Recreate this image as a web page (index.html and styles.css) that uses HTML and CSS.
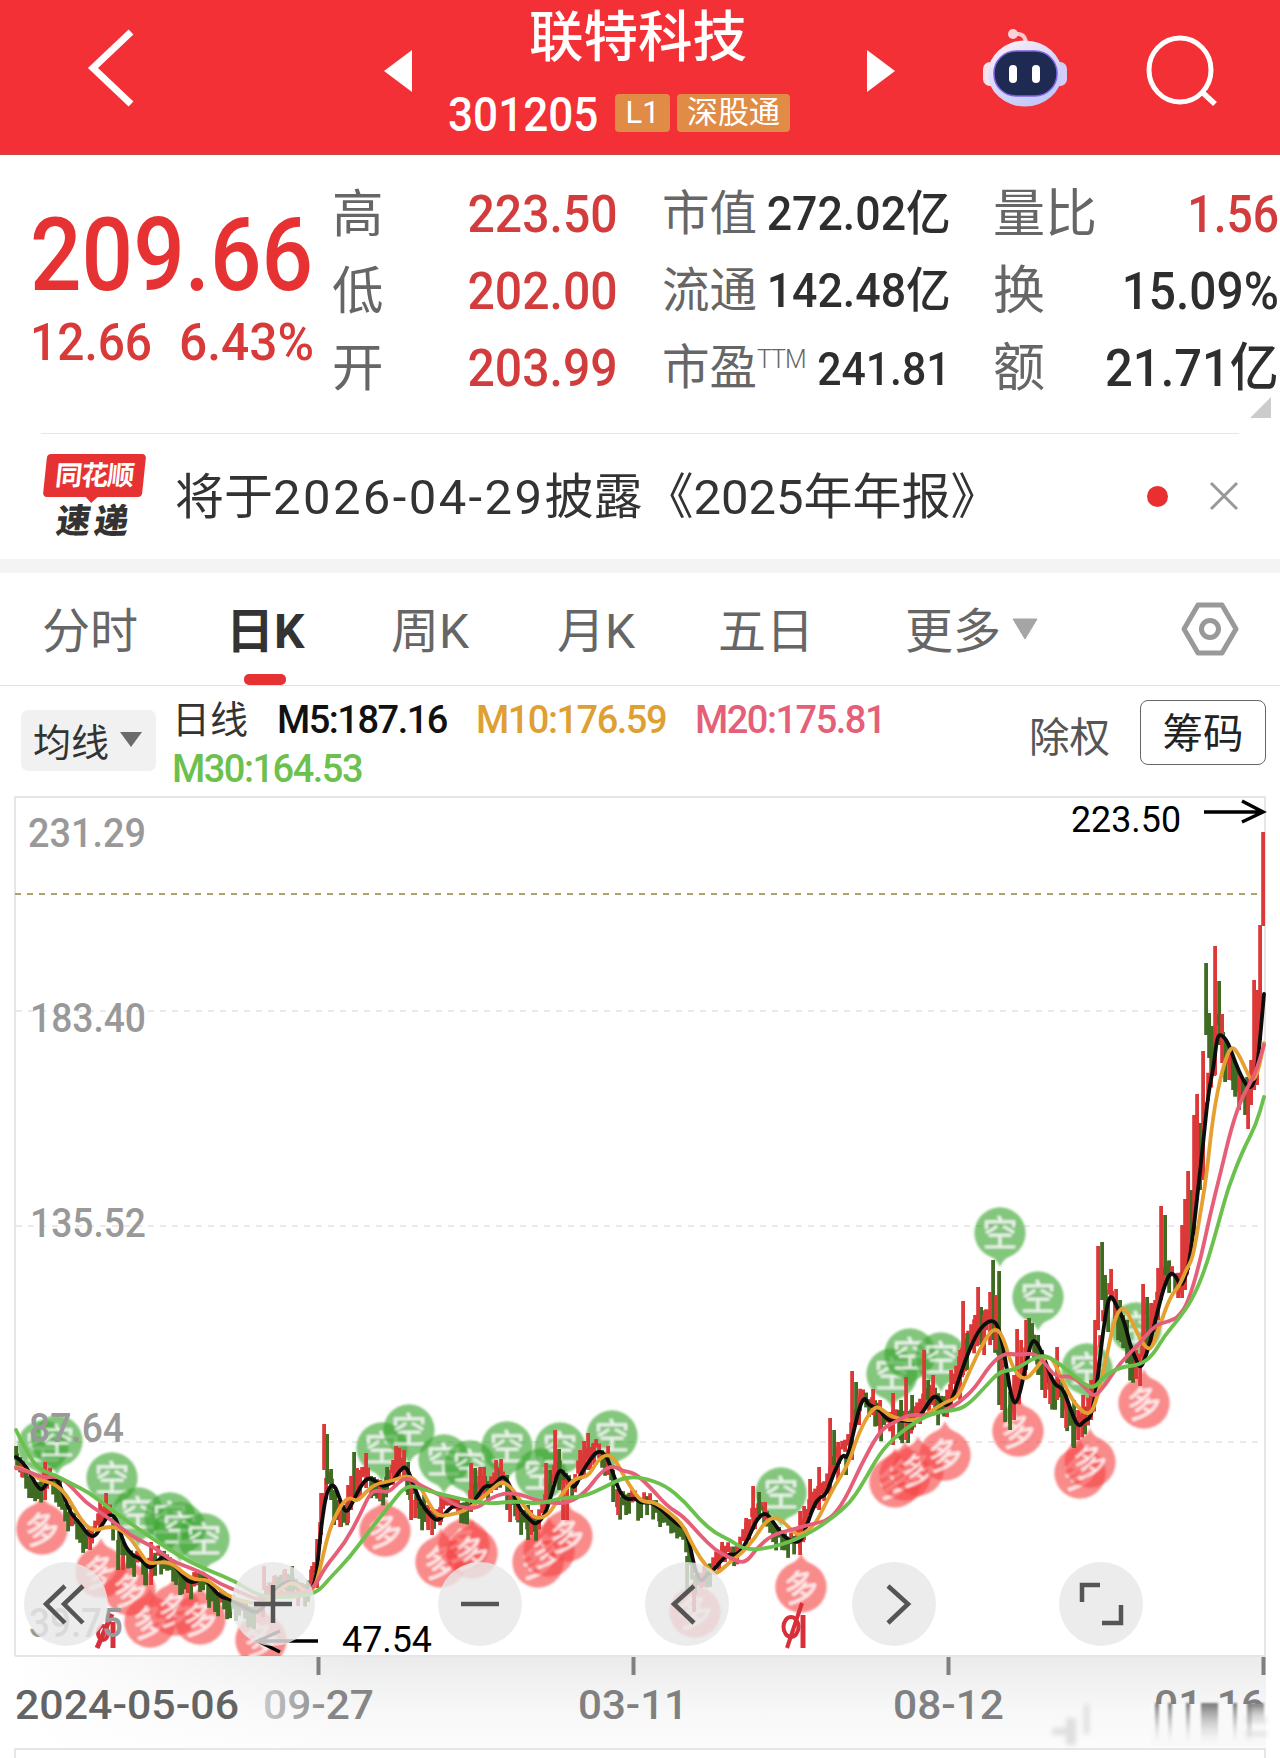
FILE: index.html
```html
<!DOCTYPE html>
<html lang="zh-CN">
<head>
    <meta charset="UTF-8">
    <meta name="viewport" content="width=device-width, initial-scale=1.0">
    <title>联特科技 301205</title>
    <link rel="stylesheet" href="styles.css">
</head>
<body>
<header class="topbar">
    <svg class="back" width="50" height="84" viewBox="0 0 50 84"><path d="M45 6L7 42L45 78" fill="none" stroke="#fff" stroke-width="7"/></svg>
    <svg class="prev" width="28" height="42" viewBox="0 0 28 42"><path d="M28 0V42L0 21Z" fill="#fff"/></svg>
    <div class="stock">
        <h1>联特科技</h1>
        <div class="stock-sub">
            <span class="code"><span class="num">301205</span></span>
            <span class="badge">L1</span>
            <span class="badge wide">深股通</span>
        </div>
    </div>
    <svg class="next" width="28" height="42" viewBox="0 0 28 42"><path d="M0 0V42L28 21Z" fill="#fff"/></svg>
    <svg class="robot" width="88" height="80" viewBox="0 0 88 80">
        <defs>
            <linearGradient id="shell" x1="0" y1="0" x2="0.6" y2="1">
                <stop offset="0" stop-color="#fff2f4"/><stop offset="0.55" stop-color="#dcd8fb"/><stop offset="1" stop-color="#c3c8fa"/>
            </linearGradient>
        </defs>
        <path d="M31 7Q43 5 44 16" fill="none" stroke="#fbc6cc" stroke-width="4"/>
        <circle cx="31" cy="7" r="5" fill="#fbd3d8"/>
        <rect x="1" y="35" width="14" height="24" rx="7" fill="#f7e3ee"/>
        <rect x="71" y="35" width="14" height="24" rx="7" fill="#d4cdf8"/>
        <ellipse cx="43" cy="46.500" rx="37" ry="33" fill="url(#shell)"/>
        <rect x="12" y="24" width="63" height="45" rx="22" fill="#1f2a52" stroke="#7c63e0" stroke-width="1.500"/>
        <rect x="27" y="38" width="8" height="18" rx="4" fill="#fff"/>
        <rect x="50" y="38" width="8" height="18" rx="4" fill="#fff"/>
    </svg>
    <svg class="search" width="74" height="74" viewBox="0 0 74 74"><ellipse cx="34" cy="36" rx="31" ry="32" fill="none" stroke="#fff" stroke-width="5"/><path d="M56 58L69 70" stroke="#fff" stroke-width="5.500"/></svg>
</header>

<section class="quote">
    <div class="price-box">
        <div class="price"><span class="num">209.66</span></div>
        <div class="change"><span class="num">12.66</span><span class="num rate">6.43%</span></div>
    </div>
    <dl class="col-a">
        <dt>高</dt><dd class="up"><span class="num">223.50</span></dd>
        <dt>低</dt><dd class="up"><span class="num">202.00</span></dd>
        <dt>开</dt><dd class="up"><span class="num">203.99</span></dd>
    </dl>
    <dl class="col-b">
        <dt>市值</dt><dd><span class="num">272.02亿</span></dd>
        <dt>流通</dt><dd><span class="num">142.48亿</span></dd>
        <dt>市盈<sup>TTM</sup></dt><dd><span class="num pe">241.81</span></dd>
    </dl>
    <dl class="col-c">
        <dt>量比</dt><dd class="up"><span class="num">1.56</span></dd>
        <dt>换</dt><dd><span class="num">15.09%</span></dd>
        <dt>额</dt><dd><span class="num">21.71亿</span></dd>
    </dl>
    <i class="corner"></i>
</section>

<section class="notice">
    <div class="logo">
        <div class="logo-top">同花顺</div>
        <div class="logo-bottom">速递</div>
    </div>
    <p>将于<span class="date">2026-04-29</span>披露<span class="book">《2025年年报》</span></p>
    <i class="dot"></i>
    <svg class="close" width="30" height="30" viewBox="0 0 30 30"><path d="M2 2L28 28M28 2L2 28" stroke="#999" stroke-width="3"/></svg>
</section>

<nav class="tabs">
    <a>分时</a>
    <a class="active">日K</a>
    <a>周K</a>
    <a>月K</a>
    <a>五日</a>
    <a>更多<svg width="26" height="22" viewBox="0 0 26 22"><path d="M1 1H25L13 21Z" fill="#a5a5a5" stroke="#a5a5a5" stroke-linejoin="round"/></svg></a>
    <svg class="gear" width="58" height="54" viewBox="0 0 58 54"><path d="M17 3H41L55 27L41 51H17L3 27Z" fill="none" stroke="#999" stroke-width="5" stroke-linejoin="round"/><circle cx="29" cy="27" r="8.500" fill="none" stroke="#999" stroke-width="5"/></svg>
</nav>

<section class="legend">
    <div class="select">均线<svg width="22" height="15" viewBox="0 0 22 15"><path d="M0 0H22L11 15Z" fill="#6b6b6b"/></svg></div>
    <div class="ma-list">
        <span class="day">日线</span>
        <span class="ma m5">M5:187.16</span>
        <span class="ma m10">M10:176.59</span>
        <span class="ma m20">M20:175.81</span>
        <span class="ma m30">M30:164.53</span>
    </div>
    <span class="adjust">除权</span>
    <button class="chips">筹码</button>
</section>

<svg id="chart" class="chart" width="1280" height="968" viewBox="0 790 1280 968">
    <defs>
        <linearGradient id="band" x1="0" y1="0" x2="0" y2="1">
            <stop offset="0" stop-color="#ebebeb"/><stop offset="0.6" stop-color="#f8f8f8"/><stop offset="1" stop-color="#fcfcfc"/>
        </linearGradient>
        <linearGradient id="bandFade" x1="0" y1="0" x2="1" y2="0">
            <stop offset="0" stop-color="#fff"/><stop offset="1" stop-color="#fff" stop-opacity="0"/>
        </linearGradient>
        <linearGradient id="smear" x1="0" y1="0" x2="0" y2="1">
            <stop offset="0" stop-color="#777"/><stop offset="1" stop-color="#fafafa" stop-opacity="0.200"/>
        </linearGradient>
        <linearGradient id="dateFade" gradientUnits="userSpaceOnUse" x1="264" y1="0" x2="330" y2="0">
            <stop offset="0" stop-color="#c8c8c8"/><stop offset="1" stop-color="#868686"/>
        </linearGradient>
        <clipPath id="plot"><rect x="14" y="796" width="1252" height="860"/></clipPath>
        <filter id="soft" x="-10%" y="-10%" width="120%" height="120%"><feGaussianBlur stdDeviation="0.900"/></filter>
        <filter id="haze" x="-10%" y="-10%" width="120%" height="120%"><feGaussianBlur stdDeviation="2.500"/></filter>
    </defs>

    <!-- frame and grid -->
    <rect x="15" y="1656" width="1251" height="92" fill="url(#band)"/>
    <rect x="14" y="1656" width="340" height="92" fill="url(#bandFade)"/>
    <g fill="none" stroke="#e6e6e6" stroke-width="2">
        <path d="M15 1656V797H1265V1656"/>
        <path d="M15 1656H1265"/>
        <path d="M15 1758V1749H1265V1758"/>
    </g>
    <g stroke="#e3e3e3" stroke-width="1.500" stroke-dasharray="6 6">
        <path d="M16 1011H1264"/><path d="M16 1226H1264"/><path d="M16 1442H1264"/>
    </g>
    <path d="M15 894H1264" stroke="#aaa070" stroke-width="2" stroke-dasharray="6 6"/>

    <g id="marks" clip-path="url(#plot)"></g>
    <g id="candles"></g>
    <g id="lines" fill="none" stroke-width="3.800" stroke-linejoin="round" stroke-linecap="round"></g>

    <!-- ex-dividend marks -->
    <g fill="none" stroke="#d8303a" stroke-width="4">
        <ellipse cx="103" cy="1633" rx="5" ry="7"/><path d="M97 1648L112 1614M113 1622V1648" stroke-width="5"/>
        <ellipse cx="791" cy="1627" rx="7.500" ry="10"/><path d="M803 1615V1648" stroke-width="5"/><path d="M787 1648L802 1603"/>
    </g>

    <g class="axis">
        <text x="28" y="847" textLength="118">231.29</text>
        <text x="30" y="1032" textLength="116">183.40</text>
        <text x="30" y="1237" textLength="116">135.52</text>
        <text x="29" y="1442" textLength="95">87.64</text>
        <text x="29" y="1637" textLength="94">39.75</text>
    </g>

    <g class="peak">
        <text x="1071" y="832" textLength="110">223.50</text>
        <text x="342" y="1652" textLength="90">47.54</text>
        <path d="M1204 812H1262M1242 801L1263 812L1242 822"/>
        <path d="M318 1641H259M280 1631L258 1641L280 1652"/>
    </g>

    <!-- floating chart controls -->
    <g class="ctrl">
        <circle cx="66" cy="1604" r="42"/><circle cx="273" cy="1604" r="42"/><circle cx="480" cy="1604" r="42"/>
        <circle cx="687" cy="1604" r="42"/><circle cx="894" cy="1604" r="42"/><circle cx="1101" cy="1604" r="42"/>
    </g>
    <g class="ctrl-icon">
        <path d="M65 1586L46 1604L65 1623M83 1586L64 1604L83 1623"/>
        <path d="M254 1604H292M273 1585V1623"/>
        <path d="M461 1604H499"/>
        <path d="M694 1586L674 1604L694 1623"/>
        <path d="M888 1586L908 1604L888 1623"/>
        <path d="M1082 1602V1585H1100M1121 1605V1623H1102"/>
    </g>

    <g stroke="#808080" stroke-width="4">
        <path d="M318.500 1657V1675"/><path d="M633.500 1657V1675"/><path d="M948.500 1657V1675"/><path d="M1263.500 1657V1675"/>
    </g>
    <g class="dates">
        <text x="15" y="1719" textLength="224" fill="#646464">2024-05-06</text>
        <text x="263" y="1719" textLength="111" fill="url(#dateFade)">09-27</text>
        <text x="578" y="1719" textLength="110">03-11</text>
        <text x="893" y="1719" textLength="111">08-12</text>
        <text x="1154" y="1719" textLength="111">01-16</text>
    </g>
    <rect x="1150" y="1704" width="116" height="42" fill="#f9f9f9"/>
    <g fill="#dedede" filter="url(#haze)"><rect x="1052" y="1728" width="18" height="7"/><rect x="1066" y="1718" width="10" height="27"/><rect x="1084" y="1704" width="5" height="30"/><rect x="1245" y="1718" width="22" height="4"/><rect x="1245" y="1732" width="22" height="4"/></g>
    <g filter="url(#soft)" fill="url(#smear)">
        <rect x="1155" y="1703" width="4" height="41"/><rect x="1168" y="1703" width="4" height="41"/>
        <rect x="1186" y="1703" width="4" height="41"/><rect x="1201" y="1703" width="17" height="42"/>
        <rect x="1233" y="1703" width="4" height="41"/><rect x="1247" y="1703" width="5" height="42"/><rect x="1252" y="1703" width="12" height="24"/>
    </g>
</svg>
<script src="chart.js"></script>
</body>
</html>
```
FILE: styles.css
```css
* {
    box-sizing: border-box;
}

body {
    margin: 0;
    width: 1280px;
    height: 1758px;
    overflow: hidden;
    background: #fff;
    color: #333;
    font-family: Roboto, "Noto Sans CJK SC", sans-serif;
}

h1, p, dl, dt, dd {
    margin: 0;
    font-weight: 400;
}

svg {
    display: block;
    flex: none;
}

/* header */
.topbar {
    height: 155px;
    background: #f23035;
    border-bottom: 1px solid #c8474b;
    display: flex;
    align-items: flex-start;
    color: #fff;
}

.back { margin: 26px 0 0 86px; }
.prev { margin: 50px 0 0 248px; }

.stock {
    width: 455px;
    height: 154px;
    padding-left: 36px;
}

.stock h1 {
    font-size: 54.5px;
    font-weight: 500;
    line-height: 74px;
    padding-left: 81px;
}

.stock-sub {
    display: flex;
    align-items: center;
    height: 38px;
    margin-top: 20px;
}

.code {
    width: 149px;
    font-size: 49px;
    font-weight: 500;
    margin-right: 18px;
}

.code .num { transform: translateY(1px) scaleX(.9); }

.badge {
    width: 55px;
    height: 38px;
    line-height: 38px;
    border-radius: 4px;
    background: #e08c46;
    font-size: 31px;
    text-align: center;
    margin-right: 7px;
}

.badge.wide { width: 113px; }

.next { margin: 50px 0 0 0; }
.robot { margin: 27px 0 0 87px; }
.search { margin: 34px 0 0 76px; }

/* quote */
.num {
    display: inline-block;
    transform: scaleX(.92);
    transform-origin: left center;
}

.quote {
    position: relative;
    height: 278px;
    display: flex;
    padding-top: 21px;
    white-space: nowrap;
}

.price-box {
    width: 332px;
    padding-left: 30px;
    color: #e63232;
    font-weight: 500;
}

.price {
    font-size: 102px;
    line-height: 120px;
    margin-top: 19px;
}

.price .num { transform: scaleX(.89); }

.change {
    display: flex;
    font-size: 52px;
    line-height: 60px;
    margin-top: -2px;
    color: #d83a3a;
}

.change .num:first-child { width: 149px; }
.change .rate { transform: scaleX(.955); }

dl {
    display: grid;
    grid-template-rows: 77px 77px 77px;
    align-items: center;
    line-height: 77px;
    color: #666;
}

dd {
    color: #2e2e2e;
    font-weight: 500;
    text-align: right;
}

dd .num { transform-origin: right center; }
dd.up { color: #d23c3c; }

.col-a {
    width: 286px;
    grid-template-columns: 100px 186px;
    font-size: 51.5px;
}

.col-a .num { transform: scaleX(.935); }

.col-b {
    width: 332px;
    margin-left: 44px;
    grid-template-columns: 140px 149px;
    font-size: 47.5px;
}

.col-b dd { display: flex; justify-content: flex-end; }
.col-b .num { transform: scaleX(.94); }
.col-b .pe { transform: scaleX(.91); font-size: 47px; }

.col-b sup {
    font-size: 25px;
    font-weight: 300;
    letter-spacing: -1px;
    line-height: 20px;
    vertical-align: 16px;
}

.col-c {
    width: 286px;
    grid-template-columns: 110px 175px;
    font-size: 52px;
}

.col-c dt { margin-left: -1px; }
.col-c dd { display: flex; justify-content: flex-end; }
.col-c .up .num { transform: scaleX(.89); }
.col-c dd:last-child .num { transform: scaleX(.94); }

.corner {
    position: absolute;
    right: 9px;
    bottom: 15px;
    border-left: 21px solid transparent;
    border-bottom: 21px solid #ccc;
}

/* notice */
.notice {
    position: relative;
    height: 140px;
    display: flex;
    align-items: center;
    border-bottom: 14px solid #f4f4f4;
}

.notice::before {
    content: "";
    position: absolute;
    left: 41px;
    right: 41px;
    top: 0;
    height: 1px;
    background: #e6e6e6;
}

.logo {
    width: 99px;
    margin-left: 45px;
    height: 84px;
    font-weight: 900;
    text-align: center;
}

.logo-top {
    position: relative;
    height: 43px;
    line-height: 44px;
    font-size: 27px;
    font-weight: 700;
    letter-spacing: -1px;
    color: #fff;
    background: #e63232;
    border-radius: 4px;
    transform: skewX(-6deg);
}

.logo-top::after {
    content: "";
    position: absolute;
    left: 42px;
    top: 42px;
    border: 7px solid transparent;
    border-top-color: #e63232;
    border-bottom: 0;
}

.logo-bottom {
    font-size: 34px;
    line-height: 49px;
    letter-spacing: 4px;
    transform: skewX(-8deg);
}

.notice p {
    width: 960px;
    margin: 0 0 7px 31px;
    font-size: 49px;
    white-space: nowrap;
}

.notice .date { letter-spacing: 2.4px; }
.notice .book { margin-left: 2px; }

.dot {
    width: 21px;
    height: 21px;
    margin-left: 12px;
    border-radius: 50%;
    background: #e92f2f;
}

.close { margin-left: 41px; }

/* tabs */
.tabs {
    height: 113px;
    display: flex;
    align-items: center;
    border-bottom: 1px solid #e2e2e2;
    font-size: 48px;
    color: #666;
}

.tabs a {
    position: relative;
    display: flex;
    align-items: center;
    height: 112px;
    padding-bottom: 5px;
    white-space: nowrap;
    width: 164px;
    flex: none;
}

.tabs a:first-child { margin-left: 42px; width: 184px; }
.tabs a:nth-child(2) { width: 165px; }
.tabs a:nth-child(3) { width: 166px; }
.tabs a:nth-child(4) { width: 161px; }
.tabs a:nth-child(5) { width: 187px; }
.tabs a:nth-child(6) { width: 276px; }
.tabs a svg { margin-left: 11px; margin-top: 4px; }

.tabs .active {
    font-weight: 700;
    color: #333;
}

.tabs .active::after {
    content: "";
    position: absolute;
    left: 18px;
    bottom: 0;
    width: 42px;
    height: 11px;
    border-radius: 5px;
    background: #e63232;
}

/* legend */
.legend {
    height: 104px;
    display: flex;
    align-items: flex-start;
    font-size: 38px;
}

.select {
    width: 135px;
    height: 61px;
    margin: 24px 0 0 21px;
    padding: 0 0 2px 12px;
    border-radius: 7px;
    background: #f1f1f1;
    display: flex;
    align-items: center;
    gap: 11px;
}

.ma-list {
    width: 756px;
    margin: 10px 0 0 16px;
    display: flex;
    flex-wrap: wrap;
    line-height: 49px;
}

.day { width: 105px; }

.ma {
    font-weight: 500;
    letter-spacing: -1.5px;
}

.m5 { width: 199px; color: #111; }
.m10 { width: 219px; color: #dea032; }
.m20 { width: 200px; color: #e65f78; }
.m30 { color: #6cc04d; }

.adjust {
    width: 111px;
    margin-left: 101px;
    margin-top: 23px;
    font-size: 40.5px;
    line-height: 58px;
    color: #555;
}

.chips {
    width: 126px;
    height: 65px;
    margin-top: 14px;
    padding: 0 0 4px;
    border: 1.5px solid #666;
    border-radius: 8px;
    background: #fff;
    color: #222;
    font: 40.5px Roboto, "Noto Sans CJK SC", sans-serif;
}

/* chart */
.chart text {
    font-family: Roboto, "Noto Sans CJK SC", sans-serif;
}

.axis text {
    font-size: 40px;
    font-weight: 500;
    fill: #999;
}

.dates text {
    font-size: 41px;
    font-weight: 500;
}

.dates {
    fill: #808080;
}

.peak text {
    font-size: 36px;
    fill: #000;
}

.peak path {
    fill: none;
    stroke: #000;
    stroke-width: 3.5;
}

.ctrl circle {
    fill: #e8e8e8;
    fill-opacity: .82;
}

.ctrl-icon path {
    fill: none;
    stroke: #555;
    stroke-width: 4.5;
}

.mark text {
    font-size: 35px;
    font-weight: 400;
    fill: #fff;
    fill-opacity: .85;
    text-anchor: middle;
}
```
FILE: chart.js
```javascript
const NS = 'http://www.w3.org/2000/svg';
const RED = '#dc3838';
const GREEN = '#3f6b22';

// moving averages, x y pairs
const ma = {
    m30: [16,1430,28,1455,40,1470,55,1475,70,1483,90,1493,110,1509,130,1523,150,1537,170,1550,190,1562,210,1571,235,1581,260,1597,290,1597,316,1594,330,1578,350,1557,370,1530,390,1505,407,1484,425,1490,445,1495,465,1500,490,1504,515,1501,540,1504,560,1498,583,1497,605,1487,622,1478,640,1477,665,1485,685,1502,700,1520,715,1533,730,1540,745,1550,770,1548,795,1540,815,1530,832,1518,850,1503,863,1483,880,1453,895,1437,915,1422,935,1412,958,1410,970,1403,985,1387,1000,1371,1015,1370,1030,1360,1043,1355,1055,1360,1075,1377,1093,1390,1103,1377,1120,1367,1140,1365,1153,1355,1165,1335,1178,1320,1192,1300,1205,1270,1218,1225,1228,1188,1243,1150,1256,1125,1264,1097],
    m20: [16,1468,30,1472,43,1478,58,1476,70,1485,85,1502,100,1512,115,1523,130,1535,145,1543,157,1549,170,1560,185,1566,203,1573,220,1584,240,1592,260,1601,280,1592,297,1594,313,1590,325,1567,345,1543,360,1515,370,1493,378,1490,388,1493,398,1483,407,1477,420,1485,440,1495,455,1505,465,1508,478,1508,490,1498,505,1493,520,1494,535,1500,550,1503,568,1503,585,1493,600,1473,612,1465,622,1471,635,1473,650,1487,668,1507,683,1516,700,1535,715,1550,730,1558,745,1564,757,1548,772,1535,790,1530,812,1524,830,1520,845,1500,860,1467,880,1430,895,1422,910,1414,925,1416,945,1411,960,1402,975,1388,990,1365,1004,1353,1018,1355,1035,1353,1045,1363,1055,1377,1072,1376,1085,1387,1094,1398,1105,1385,1120,1363,1140,1343,1155,1325,1170,1321,1178,1317,1188,1303,1200,1262,1210,1215,1220,1175,1232,1125,1243,1095,1255,1075,1264,1045],
    m10: [16,1467,28,1470,40,1480,55,1484,66,1494,76,1512,86,1526,95,1531,105,1527,116,1527,128,1535,140,1552,148,1564,160,1562,172,1563,183,1573,195,1580,206,1579,220,1590,232,1598,250,1603,265,1604,280,1589,293,1581,305,1592,315,1589,322,1560,330,1527,342,1503,350,1497,357,1502,365,1493,375,1484,392,1481,408,1475,418,1482,428,1502,437,1516,450,1515,465,1511,480,1500,493,1488,502,1481,512,1488,522,1503,530,1514,538,1519,548,1515,556,1503,565,1490,575,1478,588,1477,598,1460,607,1454,615,1459,625,1478,634,1492,642,1502,655,1502,670,1513,683,1525,690,1540,700,1558,712,1573,718,1573,730,1562,742,1553,755,1538,765,1522,774,1517,783,1521,792,1531,800,1536,815,1525,825,1505,835,1485,848,1465,858,1435,868,1415,877,1405,888,1415,900,1419,915,1421,930,1412,945,1402,958,1398,970,1370,982,1345,993,1328,1002,1333,1013,1370,1025,1381,1035,1370,1044,1358,1052,1357,1062,1380,1075,1405,1090,1417,1098,1395,1106,1360,1114,1320,1122,1306,1128,1313,1138,1335,1146,1348,1152,1349,1160,1325,1170,1297,1180,1285,1186,1270,1193,1258,1200,1215,1206,1180,1213,1115,1222,1070,1231,1045,1238,1053,1246,1070,1252,1082,1258,1073,1264,1043],
    m5: [16,1457,22,1461,30,1473,36,1485,42,1491,48,1481,56,1477,62,1490,70,1513,80,1523,88,1535,95,1537,102,1525,109,1514,116,1517,124,1545,133,1556,140,1558,150,1570,158,1560,165,1556,176,1567,186,1580,193,1583,204,1577,210,1585,220,1597,230,1599,245,1608,258,1614,268,1600,280,1585,292,1580,302,1590,312,1590,316,1578,319,1550,322,1520,327,1490,334,1483,340,1500,346,1514,353,1502,360,1487,368,1477,377,1482,383,1487,393,1482,400,1470,406,1466,412,1480,420,1502,430,1515,438,1522,448,1510,455,1505,463,1508,468,1510,477,1497,485,1485,493,1487,500,1478,505,1477,512,1490,520,1510,530,1520,536,1525,545,1515,552,1493,559,1468,565,1475,570,1480,574,1490,582,1472,590,1460,597,1451,605,1453,612,1470,620,1493,627,1500,635,1498,641,1503,650,1502,660,1508,670,1518,680,1526,685,1528,690,1545,695,1570,701,1583,707,1574,712,1572,720,1562,728,1554,738,1555,748,1540,756,1520,765,1512,772,1520,780,1532,788,1540,800,1543,806,1528,814,1505,820,1497,826,1495,833,1475,843,1453,847,1460,854,1430,860,1405,865,1397,868,1405,878,1408,889,1422,900,1420,912,1422,922,1414,930,1400,936,1395,943,1405,950,1405,957,1385,966,1358,976,1335,984,1324,992,1320,998,1325,1004,1350,1012,1403,1018,1402,1026,1365,1031,1342,1036,1340,1045,1360,1054,1385,1063,1388,1070,1408,1078,1428,1085,1420,1091,1418,1097,1385,1102,1340,1107,1305,1111,1294,1117,1307,1124,1320,1130,1345,1137,1362,1141,1369,1148,1350,1156,1318,1163,1290,1170,1272,1176,1276,1181,1288,1188,1270,1193,1235,1198,1190,1203,1145,1208,1095,1214,1065,1217,1037,1221,1034,1228,1042,1235,1062,1243,1080,1250,1090,1256,1078,1260,1040,1264,994]
};
const maColor = { m30: '#6cc04d', m20: '#e65f78', m10: '#e6a030', m5: '#0d0d0d' };

// long bars: x, high, low
const up = [[45,1462,1500],[22,1462,1477],[72,1515,1526],[90,1535,1550],[100,1500,1528],[106,1493,1520],[123,1555,1570],[151,1542,1585],[188,1580,1593],[264,1566,1590],[274,1576,1596],[285,1569,1590],[298,1590,1606],[312,1566,1590],[317,1539,1588],[321,1493,1535],[324,1424,1470],[340,1500,1527],[348,1485,1523],[351,1476,1510],[357,1468,1495],[360,1470,1495],[366,1453,1488],[380,1480,1500],[393,1460,1485],[396,1446,1480],[399,1448,1480],[404,1450,1475],[411,1480,1520],[415,1500,1518],[428,1505,1530],[432,1510,1535],[441,1494,1522],[471,1463,1512],[480,1467,1500],[484,1467,1495],[496,1460,1490],[501,1459,1485],[510,1495,1522],[517,1500,1520],[531,1510,1535],[546,1463,1515],[555,1430,1480],[563,1480,1520],[567,1478,1520],[580,1450,1480],[584,1441,1475],[588,1433,1470],[594,1443,1465],[608,1446,1475],[618,1490,1515],[694,1583,1612],[722,1542,1560],[746,1518,1545],[753,1486,1530],[765,1502,1520],[800,1511,1555],[804,1506,1540],[810,1479,1500],[819,1467,1510],[830,1418,1495],[838,1442,1480],[852,1371,1460],[859,1395,1425],[873,1389,1415],[880,1400,1435],[893,1393,1445],[906,1377,1440],[924,1350,1410],[933,1375,1405],[951,1370,1405],[960,1350,1400],[963,1301,1375],[975,1315,1345],[978,1287,1340],[984,1315,1355],[990,1292,1345],[996,1295,1350],[1002,1360,1410],[1014,1375,1420],[1017,1329,1400],[1021,1340,1385],[1026,1320,1370],[1045,1360,1398],[1050,1370,1404],[1057,1347,1400],[1066,1390,1428],[1078,1410,1440],[1083,1395,1425],[1091,1380,1420],[1095,1320,1400],[1098,1246,1330],[1111,1269,1300],[1116,1289,1320],[1136,1350,1379],[1140,1360,1386],[1143,1284,1360],[1151,1303,1345],[1155,1300,1330],[1158,1268,1320],[1161,1206,1300],[1178,1275,1298],[1182,1225,1298],[1185,1199,1290],[1188,1171,1270],[1194,1115,1235],[1197,1094,1200],[1203,1051,1180],[1215,946,1075],[1222,1014,1063],[1229,1050,1080],[1239,1075,1110],[1248,1090,1129],[1251,1060,1105],[1254,980,1090],[1257,990,1085],[1260,925,1040],[1263,832,926]];
const down = [[16,1446,1460],[32,1480,1498],[60,1480,1500],[70,1505,1525],[118,1540,1570],[145,1570,1585],[180,1578,1595],[208,1580,1600],[246,1600,1612],[292,1566,1585],[327,1434,1484],[331,1469,1500],[334,1490,1525],[354,1452,1500],[387,1467,1490],[408,1462,1495],[424,1495,1522],[475,1468,1505],[507,1475,1510],[528,1505,1540],[550,1470,1500],[559,1449,1490],[613,1470,1502],[660,1505,1527],[687,1556,1590],[759,1492,1515],[834,1430,1465],[846,1455,1475],[856,1382,1420],[901,1400,1440],[912,1395,1430],[928,1380,1405],[967,1333,1370],[981,1307,1345],[993,1260,1340],[999,1271,1405],[1005,1370,1422],[1010,1405,1430],[1029,1318,1355],[1032,1323,1345],[1038,1335,1375],[1042,1350,1390],[1062,1380,1418],[1074,1400,1448],[1102,1242,1300],[1105,1275,1310],[1108,1300,1332],[1120,1300,1330],[1123,1315,1348],[1127,1320,1350],[1147,1297,1350],[1165,1215,1275],[1168,1267,1285],[1191,1190,1260],[1200,1123,1190],[1206,963,1035],[1209,1013,1058],[1212,1026,1070],[1219,981,1045],[1225,1045,1082],[1233,1065,1090],[1245,1080,1115]];

// signal pins
const shortMarks = [[43,1446],[57,1441],[112,1478],[138,1513],[170,1518],[180,1528],[204,1539],[382,1448],[409,1430],[444,1460],[470,1466],[507,1447],[541,1474],[560,1448],[612,1436],[781,1493],[892,1374],[910,1354],[941,1358],[1000,1233],[1038,1297],[1087,1369],[1136,1328]];
const longMarks = [[42,1529],[101,1572],[130,1590],[150,1622],[175,1610],[200,1619],[261,1640],[385,1531],[441,1562],[464,1545],[472,1553],[538,1562],[549,1551],[567,1536],[695,1612],[801,1587],[895,1482],[905,1475],[918,1470],[945,1455],[1018,1431],[1080,1473],[1090,1462],[1144,1403]];

function add(parent, tag, attrs, text) {
    const el = document.createElementNS(NS, tag);
    for (const key in attrs) el.setAttribute(key, attrs[key]);
    if (text) el.textContent = text;
    parent.appendChild(el);
    return el;
}

function yAt(list, x) {
    for (let i = 0; i < list.length - 2; i += 2) {
        if (x <= list[i + 2]) {
            const t = (x - list[i]) / (list[i + 2] - list[i]);
            return list[i + 1] + t * (list[i + 3] - list[i + 1]);
        }
    }
    return list[list.length - 1];
}

function bar(x, high, low, color) {
    add(candles, 'rect', { x: x - 1.8, y: high, width: 3.8, height: low - high, fill: color });
}

const marks = document.getElementById('marks');
const candles = document.getElementById('candles');
const lines = document.getElementById('lines');

function pin(x, y, s, color, label) {
    const g = add(marks, 'g', { class: 'mark', transform: `translate(${x} ${y})`, filter: 'url(#soft)' });
    add(g, 'path', {
        d: `M-10 ${23.5 * s}Q-3 ${26 * s} 0 ${34 * s}Q3 ${26 * s} 10 ${23.5 * s}A25.600 25.600 0 1 ${s > 0 ? 0 : 1} -10 ${23.5 * s}Z`,
        fill: color, 'fill-opacity': 0.62
    });
    const tilt = s < 0 ? 'rotate(-10)' : '';
    add(g, 'text', { x: 0, y: 13, transform: tilt }, label);
}
shortMarks.forEach(([x, y]) => pin(x, y, 1, '#38a42c', '空'));
longMarks.forEach(([x, y]) => pin(x, y, -1, '#f54343', '多'));

// everyday bars follow the 5-day line
let seed = 7;
for (let x = 17; x < 1262; x += 3) {
    seed = (seed * 73 + 41) % 997;
    const r = seed / 997;
    const y = yAt(ma.m5, x);
    const slope = yAt(ma.m5, Math.min(x + 6, 1264)) - yAt(ma.m5, Math.max(x - 3, 16));
    const mid = y + Math.max(-12, Math.min(12, slope * 0.6)) + (r - 0.5) * 14;
    const len = 8 + r * (x > 860 ? 26 : 16);
    bar(x, mid - len / 2, mid + len / 2, slope + (r - 0.5) * 24 > 0 ? GREEN : RED);
}
down.forEach(([x, h, l]) => bar(x, h, l, GREEN));
up.forEach(([x, h, l]) => bar(x, h, l, RED));

for (const key of ['m5', 'm10', 'm20', 'm30']) {
    const p = ma[key];
    let d = `M${p[0]} ${p[1]}`;
    for (let i = 2; i < p.length - 2; i += 2) {
        d += `Q${p[i]} ${p[i + 1]} ${(p[i] + p[i + 2]) / 2} ${(p[i + 1] + p[i + 3]) / 2}`;
    }
    d += `L${p[p.length - 2]} ${p[p.length - 1]}`;
    add(lines, 'path', { d: d, stroke: maColor[key] });
}

document.querySelectorAll('#chart text[textLength]').forEach(t => t.setAttribute('lengthAdjust', 'spacingAndGlyphs'));
```
